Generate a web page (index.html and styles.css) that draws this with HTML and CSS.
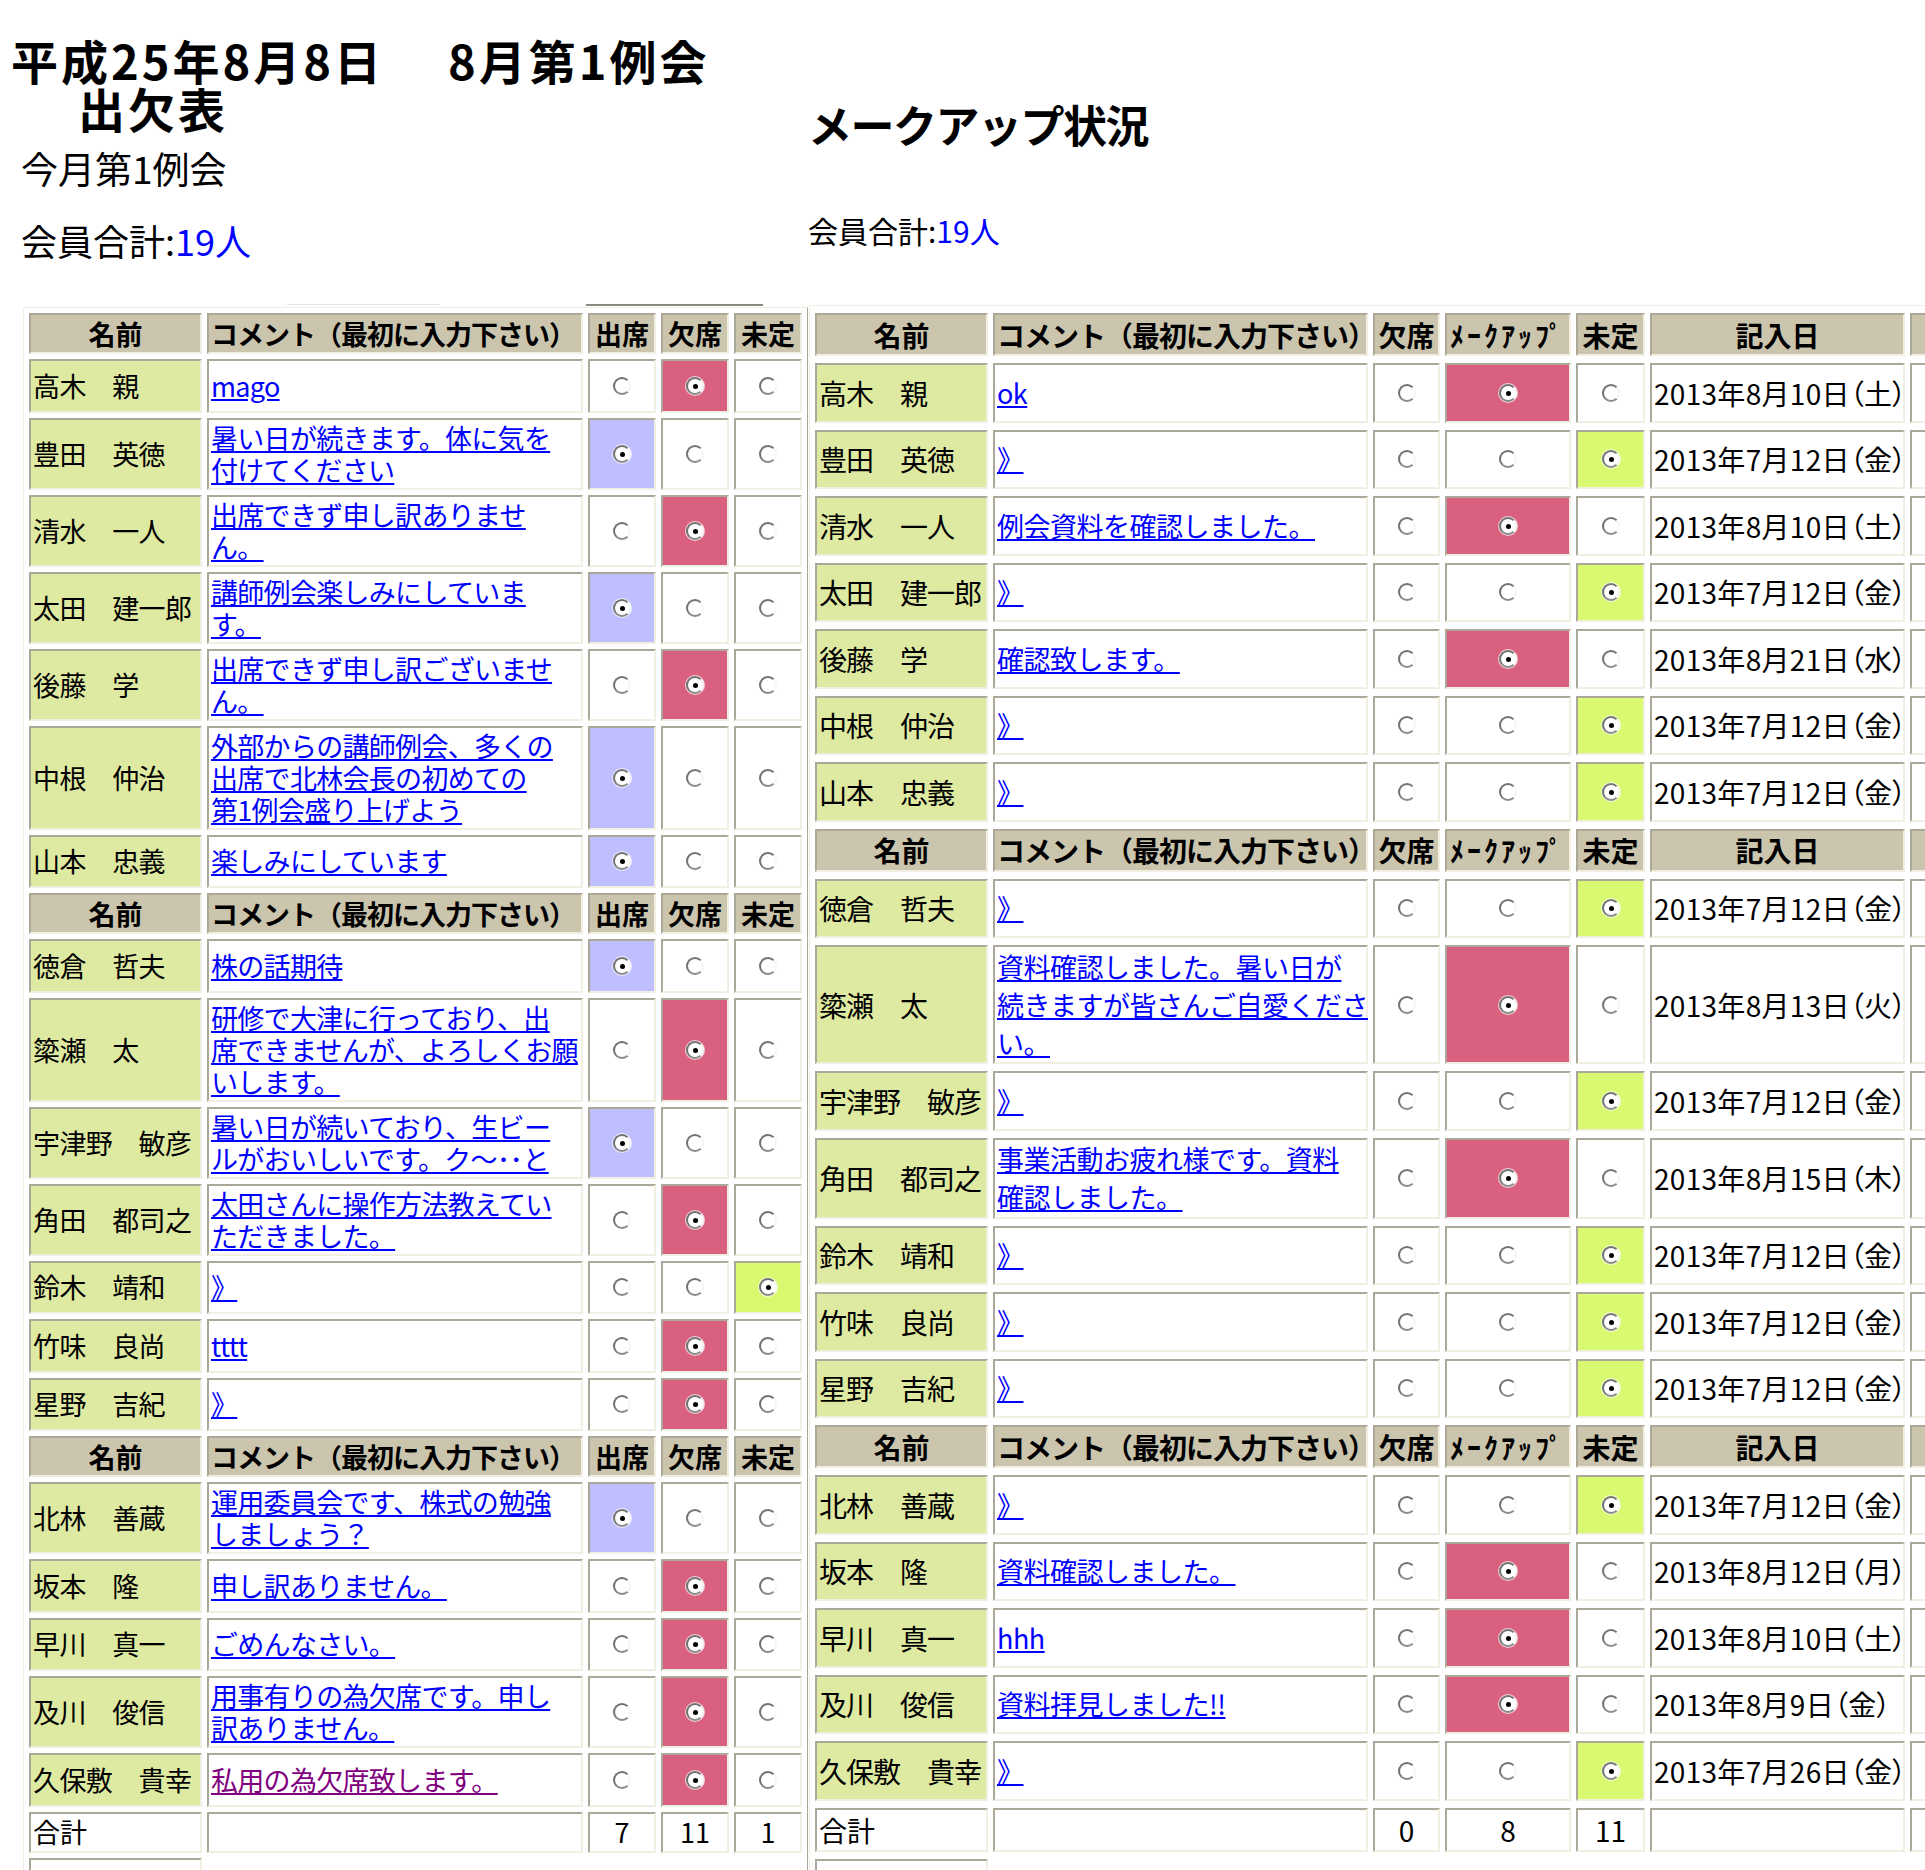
FILE: index.html
```html
<!DOCTYPE html>
<html lang="ja">
<head>
    <meta charset="UTF-8">
    <title>出欠表</title>
    <link rel="stylesheet" href="styles.css">
</head>
<body>
<div class="page">
    <div class="left">
        <h1 class="title">平成25年8月8日<span class="gap">8月第1例会</span><span class="line2">出欠表</span></h1>
        <p class="sub">今月第1例会</p>
        <p class="count">会員合計:<b>19人</b></p>
        <div class="rules"><span class="rule-light"></span><span class="rule-dark"></span></div>

        <table class="roll">
            <tr>
                <th class="c-name">名前</th><th class="c-cmt">コメント（最初に入力下さい）</th><th class="c-opt">出席</th><th class="c-opt">欠席</th><th class="c-opt">未定</th>
            </tr>
            <tr><td class="name">高木　親</td><td class="cmt"><a href="#">mago</a></td><td class="opt"><i class="radio"></i></td><td class="opt abs"><i class="radio on"></i></td><td class="opt"><i class="radio"></i></td></tr>
            <tr><td class="name">豊田　英徳</td><td class="cmt"><a href="#">暑い日が続きます。体に気を<br>付けてください</a></td><td class="opt att"><i class="radio on"></i></td><td class="opt"><i class="radio"></i></td><td class="opt"><i class="radio"></i></td></tr>
            <tr><td class="name">清水　一人</td><td class="cmt"><a href="#">出席できず申し訳ありませ<br>ん。</a></td><td class="opt"><i class="radio"></i></td><td class="opt abs"><i class="radio on"></i></td><td class="opt"><i class="radio"></i></td></tr>
            <tr><td class="name">太田　建一郎</td><td class="cmt"><a href="#">講師例会楽しみにしていま<br>す。</a></td><td class="opt att"><i class="radio on"></i></td><td class="opt"><i class="radio"></i></td><td class="opt"><i class="radio"></i></td></tr>
            <tr><td class="name">後藤　学</td><td class="cmt"><a href="#">出席できず申し訳ございませ<br>ん。</a></td><td class="opt"><i class="radio"></i></td><td class="opt abs"><i class="radio on"></i></td><td class="opt"><i class="radio"></i></td></tr>
            <tr><td class="name">中根　仲治</td><td class="cmt"><a href="#">外部からの講師例会、多くの<br>出席で北林会長の初めての<br>第1例会盛り上げよう</a></td><td class="opt att"><i class="radio on"></i></td><td class="opt"><i class="radio"></i></td><td class="opt"><i class="radio"></i></td></tr>
            <tr><td class="name">山本　忠義</td><td class="cmt"><a href="#">楽しみにしています</a></td><td class="opt att"><i class="radio on"></i></td><td class="opt"><i class="radio"></i></td><td class="opt"><i class="radio"></i></td></tr>
            <tr>
                <th class="c-name">名前</th><th class="c-cmt">コメント（最初に入力下さい）</th><th class="c-opt">出席</th><th class="c-opt">欠席</th><th class="c-opt">未定</th>
            </tr>
            <tr><td class="name">徳倉　哲夫</td><td class="cmt"><a href="#">株の話期待</a></td><td class="opt att"><i class="radio on"></i></td><td class="opt"><i class="radio"></i></td><td class="opt"><i class="radio"></i></td></tr>
            <tr><td class="name">簗瀬　太</td><td class="cmt"><a href="#">研修で大津に行っており、出<br>席できませんが、よろしくお願<br>いします。</a></td><td class="opt"><i class="radio"></i></td><td class="opt abs"><i class="radio on"></i></td><td class="opt"><i class="radio"></i></td></tr>
            <tr><td class="name">宇津野　敏彦</td><td class="cmt"><a href="#">暑い日が続いており、生ビー<br>ルがおいしいです。ク～･･と</a></td><td class="opt att"><i class="radio on"></i></td><td class="opt"><i class="radio"></i></td><td class="opt"><i class="radio"></i></td></tr>
            <tr><td class="name">角田　都司之</td><td class="cmt"><a href="#">太田さんに操作方法教えてい<br>ただきました。</a></td><td class="opt"><i class="radio"></i></td><td class="opt abs"><i class="radio on"></i></td><td class="opt"><i class="radio"></i></td></tr>
            <tr><td class="name">鈴木　靖和</td><td class="cmt"><a href="#">》</a></td><td class="opt"><i class="radio"></i></td><td class="opt"><i class="radio"></i></td><td class="opt und"><i class="radio on"></i></td></tr>
            <tr><td class="name">竹味　良尚</td><td class="cmt"><a href="#">tttt</a></td><td class="opt"><i class="radio"></i></td><td class="opt abs"><i class="radio on"></i></td><td class="opt"><i class="radio"></i></td></tr>
            <tr><td class="name">星野　吉紀</td><td class="cmt"><a href="#">》</a></td><td class="opt"><i class="radio"></i></td><td class="opt abs"><i class="radio on"></i></td><td class="opt"><i class="radio"></i></td></tr>
            <tr>
                <th class="c-name">名前</th><th class="c-cmt">コメント（最初に入力下さい）</th><th class="c-opt">出席</th><th class="c-opt">欠席</th><th class="c-opt">未定</th>
            </tr>
            <tr><td class="name">北林　善蔵</td><td class="cmt"><a href="#">運用委員会です、株式の勉強<br>しましょう？</a></td><td class="opt att"><i class="radio on"></i></td><td class="opt"><i class="radio"></i></td><td class="opt"><i class="radio"></i></td></tr>
            <tr><td class="name">坂本　隆</td><td class="cmt"><a href="#">申し訳ありません。</a></td><td class="opt"><i class="radio"></i></td><td class="opt abs"><i class="radio on"></i></td><td class="opt"><i class="radio"></i></td></tr>
            <tr><td class="name">早川　真一</td><td class="cmt"><a href="#">ごめんなさい。</a></td><td class="opt"><i class="radio"></i></td><td class="opt abs"><i class="radio on"></i></td><td class="opt"><i class="radio"></i></td></tr>
            <tr><td class="name">及川　俊信</td><td class="cmt"><a href="#">用事有りの為欠席です。申し<br>訳ありません。</a></td><td class="opt"><i class="radio"></i></td><td class="opt abs"><i class="radio on"></i></td><td class="opt"><i class="radio"></i></td></tr>
            <tr><td class="name">久保敷　貴幸</td><td class="cmt"><a href="#" class="seen">私用の為欠席致します。</a></td><td class="opt"><i class="radio"></i></td><td class="opt abs"><i class="radio on"></i></td><td class="opt"><i class="radio"></i></td></tr>
            <tr class="sum"><td>合計</td><td></td><td class="num">7</td><td class="num">11</td><td class="num">1</td></tr>
            <tr class="tail"><td></td></tr>
        </table>
    </div>

    <div class="right">
        <h2 class="heading">メークアップ状況</h2>
        <p class="count2">会員合計:<b>19人</b></p>

        <table class="mkup">
            <tr>
                <th class="c-name">名前</th><th class="c-cmt">コメント（最初に入力下さい）</th><th class="c-abs">欠席</th><th class="c-mk">ﾒｰｸｱｯﾌﾟ</th><th class="c-und">未定</th><th class="c-date">記入日</th><th class="c-x"></th>
            </tr>
            <tr><td class="name">高木　親</td><td class="cmt"><a href="#">ok</a></td><td class="opt"><i class="radio"></i></td><td class="opt abs"><i class="radio on"></i></td><td class="opt"><i class="radio"></i></td><td class="date">2013年8月10日（土）</td><td></td></tr>
            <tr><td class="name">豊田　英徳</td><td class="cmt"><a href="#">》</a></td><td class="opt"><i class="radio"></i></td><td class="opt"><i class="radio"></i></td><td class="opt und"><i class="radio on"></i></td><td class="date">2013年7月12日（金）</td><td></td></tr>
            <tr><td class="name">清水　一人</td><td class="cmt"><a href="#">例会資料を確認しました。</a></td><td class="opt"><i class="radio"></i></td><td class="opt abs"><i class="radio on"></i></td><td class="opt"><i class="radio"></i></td><td class="date">2013年8月10日（土）</td><td></td></tr>
            <tr><td class="name">太田　建一郎</td><td class="cmt"><a href="#">》</a></td><td class="opt"><i class="radio"></i></td><td class="opt"><i class="radio"></i></td><td class="opt und"><i class="radio on"></i></td><td class="date">2013年7月12日（金）</td><td></td></tr>
            <tr><td class="name">後藤　学</td><td class="cmt"><a href="#">確認致します。</a></td><td class="opt"><i class="radio"></i></td><td class="opt abs"><i class="radio on"></i></td><td class="opt"><i class="radio"></i></td><td class="date">2013年8月21日（水）</td><td></td></tr>
            <tr><td class="name">中根　仲治</td><td class="cmt"><a href="#">》</a></td><td class="opt"><i class="radio"></i></td><td class="opt"><i class="radio"></i></td><td class="opt und"><i class="radio on"></i></td><td class="date">2013年7月12日（金）</td><td></td></tr>
            <tr><td class="name">山本　忠義</td><td class="cmt"><a href="#">》</a></td><td class="opt"><i class="radio"></i></td><td class="opt"><i class="radio"></i></td><td class="opt und"><i class="radio on"></i></td><td class="date">2013年7月12日（金）</td><td></td></tr>
            <tr>
                <th class="c-name">名前</th><th class="c-cmt">コメント（最初に入力下さい）</th><th class="c-abs">欠席</th><th class="c-mk">ﾒｰｸｱｯﾌﾟ</th><th class="c-und">未定</th><th class="c-date">記入日</th><th class="c-x"></th>
            </tr>
            <tr><td class="name">徳倉　哲夫</td><td class="cmt"><a href="#">》</a></td><td class="opt"><i class="radio"></i></td><td class="opt"><i class="radio"></i></td><td class="opt und"><i class="radio on"></i></td><td class="date">2013年7月12日（金）</td><td></td></tr>
            <tr><td class="name">簗瀬　太</td><td class="cmt"><a href="#">資料確認しました。暑い日が<br>続きますが皆さんご自愛くださ<br>い。</a></td><td class="opt"><i class="radio"></i></td><td class="opt abs"><i class="radio on"></i></td><td class="opt"><i class="radio"></i></td><td class="date">2013年8月13日（火）</td><td></td></tr>
            <tr><td class="name">宇津野　敏彦</td><td class="cmt"><a href="#">》</a></td><td class="opt"><i class="radio"></i></td><td class="opt"><i class="radio"></i></td><td class="opt und"><i class="radio on"></i></td><td class="date">2013年7月12日（金）</td><td></td></tr>
            <tr><td class="name">角田　都司之</td><td class="cmt"><a href="#">事業活動お疲れ様です。資料<br>確認しました。</a></td><td class="opt"><i class="radio"></i></td><td class="opt abs"><i class="radio on"></i></td><td class="opt"><i class="radio"></i></td><td class="date">2013年8月15日（木）</td><td></td></tr>
            <tr><td class="name">鈴木　靖和</td><td class="cmt"><a href="#">》</a></td><td class="opt"><i class="radio"></i></td><td class="opt"><i class="radio"></i></td><td class="opt und"><i class="radio on"></i></td><td class="date">2013年7月12日（金）</td><td></td></tr>
            <tr><td class="name">竹味　良尚</td><td class="cmt"><a href="#">》</a></td><td class="opt"><i class="radio"></i></td><td class="opt"><i class="radio"></i></td><td class="opt und"><i class="radio on"></i></td><td class="date">2013年7月12日（金）</td><td></td></tr>
            <tr><td class="name">星野　吉紀</td><td class="cmt"><a href="#">》</a></td><td class="opt"><i class="radio"></i></td><td class="opt"><i class="radio"></i></td><td class="opt und"><i class="radio on"></i></td><td class="date">2013年7月12日（金）</td><td></td></tr>
            <tr>
                <th class="c-name">名前</th><th class="c-cmt">コメント（最初に入力下さい）</th><th class="c-abs">欠席</th><th class="c-mk">ﾒｰｸｱｯﾌﾟ</th><th class="c-und">未定</th><th class="c-date">記入日</th><th class="c-x"></th>
            </tr>
            <tr><td class="name">北林　善蔵</td><td class="cmt"><a href="#">》</a></td><td class="opt"><i class="radio"></i></td><td class="opt"><i class="radio"></i></td><td class="opt und"><i class="radio on"></i></td><td class="date">2013年7月12日（金）</td><td></td></tr>
            <tr><td class="name">坂本　隆</td><td class="cmt"><a href="#">資料確認しました。</a></td><td class="opt"><i class="radio"></i></td><td class="opt abs"><i class="radio on"></i></td><td class="opt"><i class="radio"></i></td><td class="date">2013年8月12日（月）</td><td></td></tr>
            <tr><td class="name">早川　真一</td><td class="cmt"><a href="#">hhh</a></td><td class="opt"><i class="radio"></i></td><td class="opt abs"><i class="radio on"></i></td><td class="opt"><i class="radio"></i></td><td class="date">2013年8月10日（土）</td><td></td></tr>
            <tr><td class="name">及川　俊信</td><td class="cmt"><a href="#">資料拝見しました!!</a></td><td class="opt"><i class="radio"></i></td><td class="opt abs"><i class="radio on"></i></td><td class="opt"><i class="radio"></i></td><td class="date">2013年8月9日（金）</td><td></td></tr>
            <tr><td class="name">久保敷　貴幸</td><td class="cmt"><a href="#">》</a></td><td class="opt"><i class="radio"></i></td><td class="opt"><i class="radio"></i></td><td class="opt und"><i class="radio on"></i></td><td class="date">2013年7月26日（金）</td><td></td></tr>
            <tr class="sum"><td>合計</td><td></td><td class="num">0</td><td class="num">8</td><td class="num">11</td><td></td><td></td></tr>
            <tr class="tail"><td></td></tr>
        </table>
    </div>
</div>
</body>
</html>
```

FILE: styles.css
```css
html, body {
    overflow: hidden;
}

body {
    margin: 0;
    font-family: "Noto Sans CJK JP", sans-serif;
    color: #000;
    background: #fff;
}

.page {
    display: flex;
    align-items: flex-start;
    overflow: hidden;
}

.left {
    width: 808px;
    flex: none;
}

.right {
    flex: none;
}

/* 見出し */
.title {
    margin: 36px 0 0 11px;
    font-size: 47px;
    line-height: 48px;
    letter-spacing: 3px;
    font-weight: bold;
}

.title .gap {
    margin-left: 64px;
}

.title .line2 {
    display: block;
    padding-left: 67px;
}

.sub {
    margin: 16px 0 0 21px;
    font-size: 37px;
    line-height: 40px;
}

.count {
    margin: 32px 0 0 21px;
    font-size: 36px;
    line-height: 40px;
}

.count b, .count2 b {
    color: #0000ff;
    font-weight: normal;
}

.rules {
    display: flex;
    height: 2px;
    margin-top: 44px;
}

.rule-light {
    margin-left: 287px;
    width: 153px;
    border-top: 1px solid #e4e4e4;
}

.rule-dark {
    margin-left: 146px;
    width: 177px;
    border-top: 2px solid #8a8a84;
}

.heading {
    margin: 101px 0 0 0;
    font-size: 44px;
    line-height: 46px;
    letter-spacing: -1.5px;
    font-weight: bold;
}

.count2 {
    margin: 66px 0 0 0;
    font-size: 30px;
    line-height: 34px;
}

/* 表 */
table {
    border: 1px solid;
    border-color: #f1efe2 #aca899 #aca899 #f1efe2;
    table-layout: fixed;
    background: #fff;
}

th, td {
    border: 2px solid;
    border-color: #aca899 #f1efe2 #f1efe2 #aca899;
    box-sizing: border-box;
    padding: 2px 2px;
    vertical-align: middle;
    text-align: left;
    white-space: nowrap;
    background: #fff;
    font-weight: normal;
}

th {
    background: #cbc5ae;
    font-weight: bold;
    text-align: center;
}

th.c-cmt {
    text-align: left;
    letter-spacing: -1px;
}

th.c-mk {
    letter-spacing: 3px;
}

td.name {
    background: #dee9a1;
    letter-spacing: -0.6px;
}

td.cmt {
    letter-spacing: -0.7px;
}

td.opt, td.num {
    text-align: center;
}

td.att {
    background: #bfbfff;
}

td.abs {
    background: #d9617f;
}

td.und {
    background: #d8f970;
}

td.date {
    font-feature-settings: "palt";
    letter-spacing: 0.3px;
}

a {
    color: #0000ff;
    text-decoration: underline;
}

a.seen {
    color: #800080;
}

/* ラジオボタン */
.radio {
    display: block;
    margin: 0 auto;
    width: 18px;
    height: 18px;
    box-sizing: border-box;
    border: 2px solid;
    border-color: #727272 #f6f6f2 #8c8c8c #727272;
    border-radius: 50%;
    background: #fff;
    position: relative;
}

.radio.on {
    box-shadow: 0 0 0 1px rgba(255, 255, 255, 0.7);
}

.radio.on::after {
    content: "";
    position: absolute;
    left: 5px;
    top: 5px;
    width: 5px;
    height: 5px;
    border-radius: 50%;
    background: #000;
}

/* 出欠表 */
.roll {
    width: 785px;
    margin: 1px 0 0 23px;
    border-spacing: 5px;
    font-size: 27px;
    line-height: 32px;
}

.roll th {
    height: 41px;
}

.roll td {
    height: 53.5px;
}

.roll .sum td {
    height: 41px;
}

.roll .c-name { width: 173px; }
.roll .c-cmt { width: 376px; }
.roll .c-opt { width: 68px; }

/* メークアップ */
.mkup {
    width: 1147px;
    margin: 58px 0 0 1px;
    border-spacing: 5px 7px;
    font-size: 28px;
    line-height: 38px;
}

.mkup th {
    height: 43px;
    padding: 1px 2px;
    line-height: 34px;
}

.mkup td {
    height: 59.5px;
    padding: 0.5px 2px;
}

.mkup td.name {
    letter-spacing: -1px;
}

.mkup td.cmt {
    font-size: 27px;
    letter-spacing: -0.5px;
}

.mkup .sum td {
    height: 44px;
}

.mkup .c-name { width: 173px; }
.mkup .c-cmt { width: 375px; }
.mkup .c-abs { width: 67px; }
.mkup .c-mk { width: 126px; }
.mkup .c-und { width: 69px; }
.mkup .c-date { width: 255px; }
.mkup .c-x { width: 40px; }
```
